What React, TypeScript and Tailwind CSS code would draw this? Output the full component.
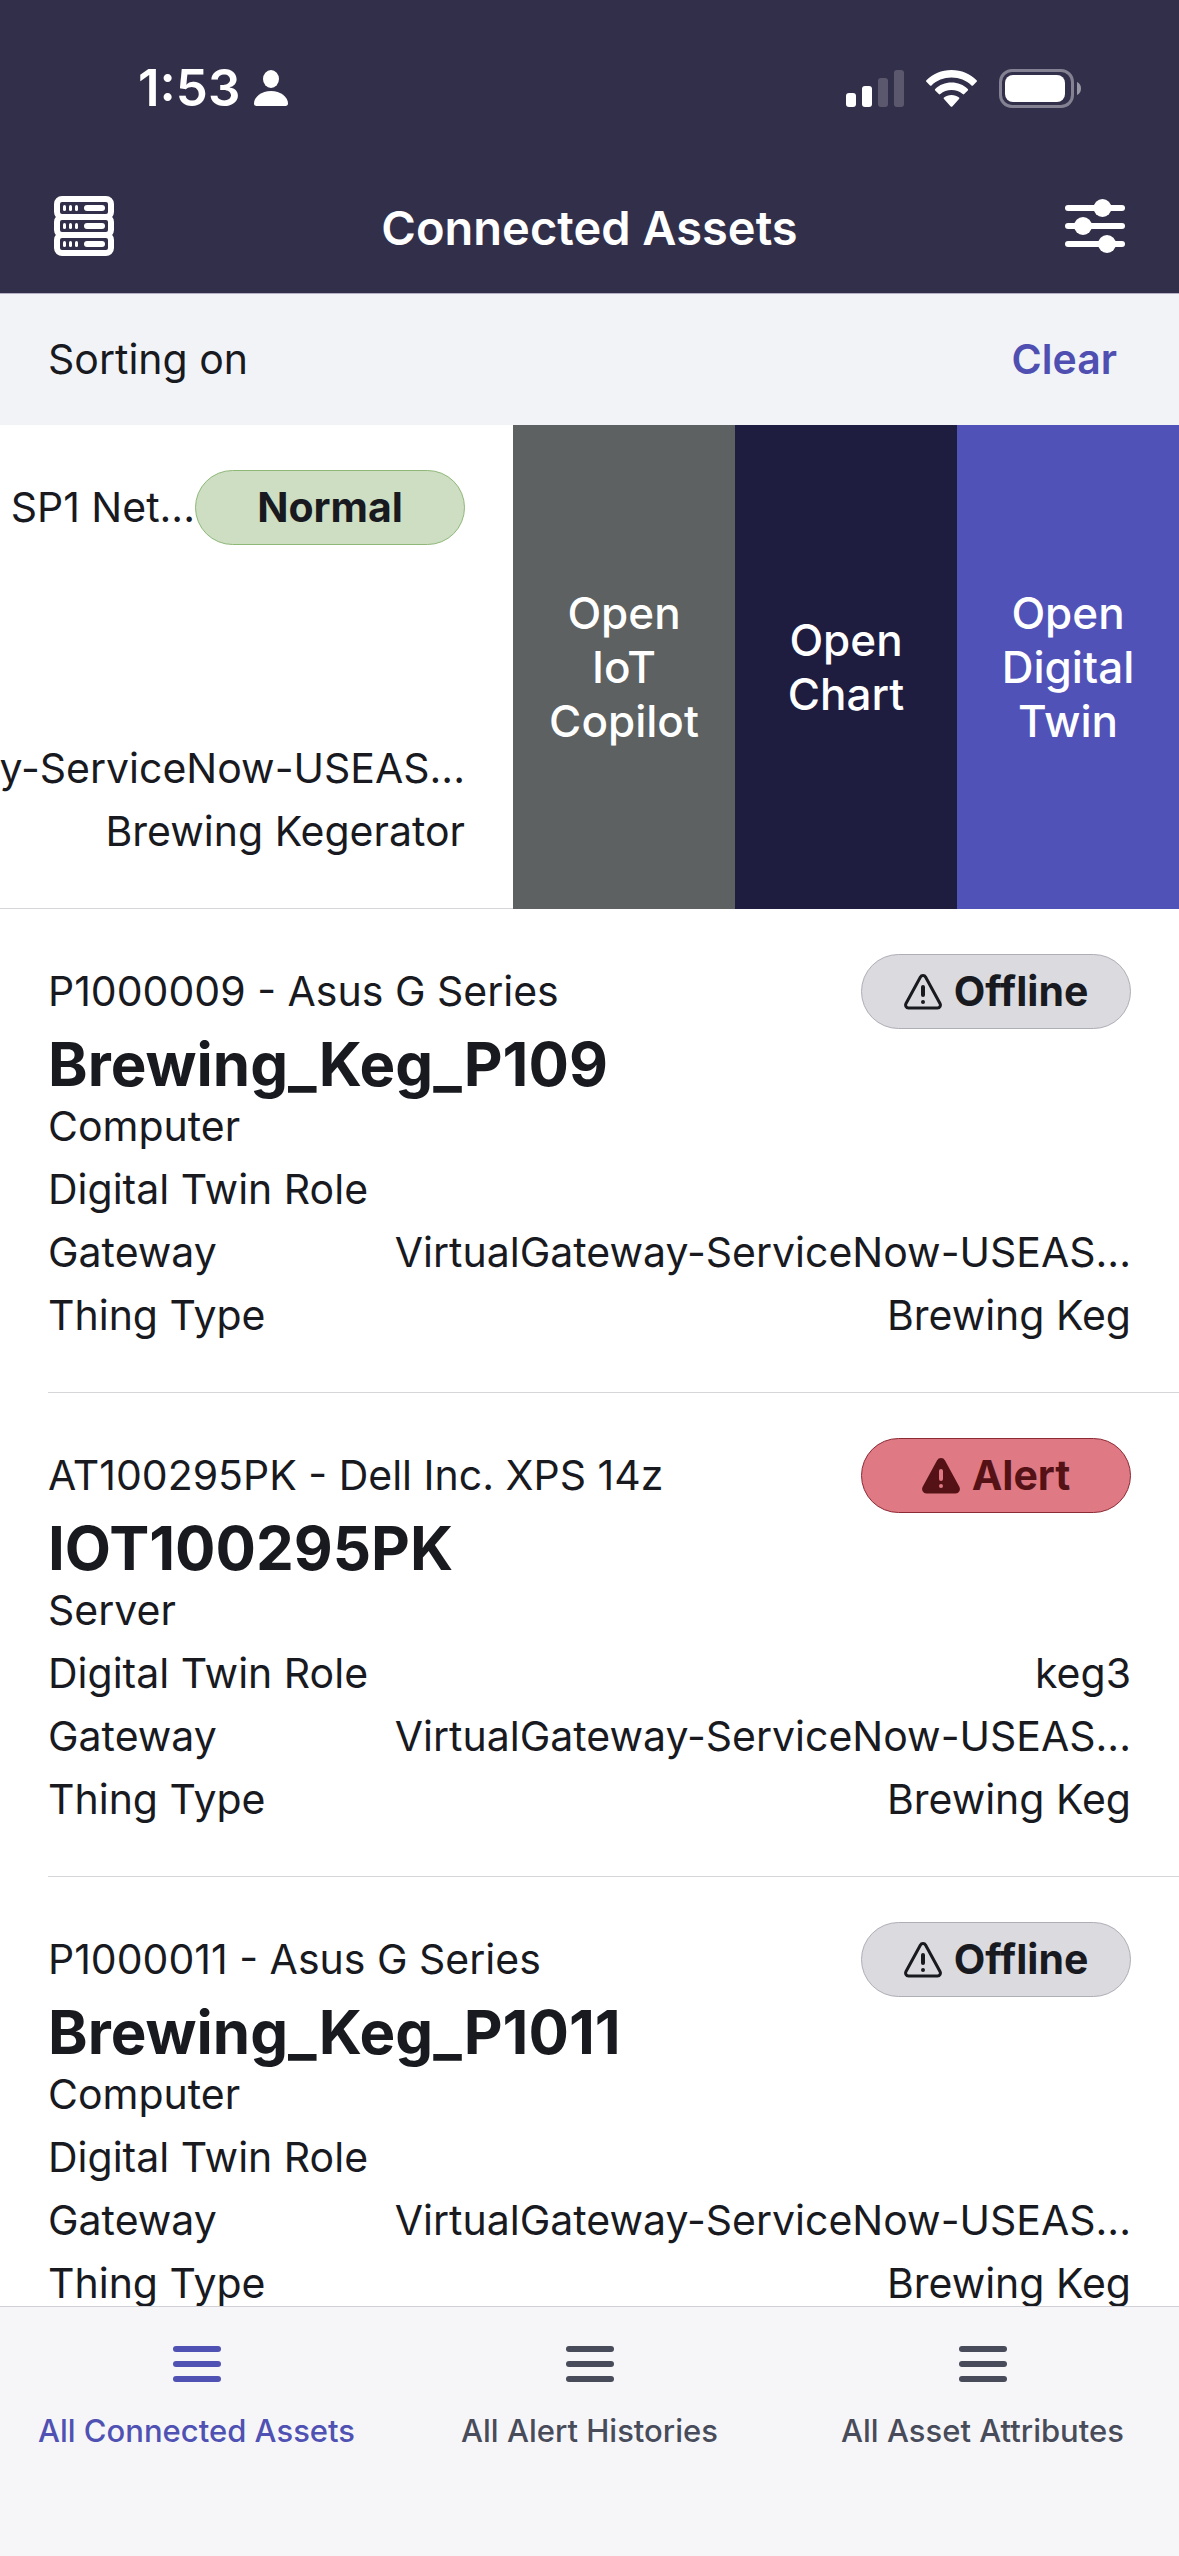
import clsx from 'clsx'

type Status = 'Normal' | 'Offline' | 'Alert'

type Asset = {
  summary: string
  name?: string
  category?: string
  role?: string
  gateway: string
  thingType: string
  status: Status
}

const GATEWAY = 'VirtualGateway-ServiceNow-USEAS...'

const swipedAsset: Asset = {
  summary: 'SP1 Net...',
  gateway: GATEWAY,
  thingType: 'Brewing Kegerator',
  status: 'Normal',
}

const assets: Asset[] = [
  {
    summary: 'P1000009 - Asus G Series',
    name: 'Brewing_Keg_P109',
    category: 'Computer',
    gateway: GATEWAY,
    thingType: 'Brewing Keg',
    status: 'Offline',
  },
  {
    summary: 'AT100295PK - Dell Inc. XPS 14z',
    name: 'IOT100295PK',
    category: 'Server',
    role: 'keg3',
    gateway: GATEWAY,
    thingType: 'Brewing Keg',
    status: 'Alert',
  },
  {
    summary: 'P1000011 - Asus G Series',
    name: 'Brewing_Keg_P1011',
    category: 'Computer',
    gateway: GATEWAY,
    thingType: 'Brewing Keg',
    status: 'Offline',
  },
]

const swipeActions = [
  { label: 'Open IoT Copilot', className: 'bg-[#5d6161]' },
  { label: 'Open Chart', className: 'bg-[#1e1d40]' },
  { label: 'Open Digital Twin', className: 'bg-[#5052b8]' },
]

const tabs = ['All Connected Assets', 'All Alert Histories', 'All Asset Attributes']

const pillStyles: Record<Status, string> = {
  Normal: 'border-[#8fb878] bg-[#cddec3] text-[#181a1f]',
  Offline: 'border-[#aeaeb6] bg-[#dadadf] text-[#181a1f]',
  Alert: 'border-[#8c2a35] bg-[#df7a84] text-[#551216]',
}

function StatusBar() {
  return (
    <div className="flex h-[176px] items-center justify-between pl-[138px] pr-[98px] text-white">
      <div className="flex items-center gap-[14px]">
        <span className="text-[51px] font-semibold leading-[60px]">1:53</span>
        <svg className="h-9 w-[34px]" viewBox="0 0 34 36" fill="currentColor" aria-hidden="true">
          <ellipse cx="17" cy="9" rx="8" ry="9" />
          <path d="M17 21c9.500 0 17 6 17 12.500 0 1.500-1 2.500-2.500 2.500h-29C1 36 0 35 0 33.500 0 27 7.500 21 17 21z" />
        </svg>
      </div>
      <div className="flex items-center gap-[22px]">
        <svg className="h-[37px] w-[58px]" viewBox="0 0 58 37" fill="currentColor" aria-hidden="true">
          <rect x="0" y="23" width="10" height="14" rx="3" />
          <rect x="16" y="16" width="10" height="21" rx="3" />
          <rect x="32" y="8" width="10" height="29" rx="3" opacity=".2" />
          <rect x="48" y="0" width="10" height="37" rx="3" opacity=".2" />
        </svg>
        <svg className="h-[37px] w-[51px]" viewBox="0 0 51 37" fill="currentColor" aria-hidden="true">
          <path d="M25.500 0C35.500 0 44.300 4 50.600 10.300c.5.5.5 1 0 1.500l-3.600 3.600c-.5.500-1 .5-1.500 0C40.300 10.500 33.300 7.600 25.500 7.600S10.700 10.500 5.500 15.400c-.5.500-1 .5-1.500 0L.4 11.800c-.5-.5-.5-1 0-1.500C6.700 4 15.500 0 25.500 0z" />
          <path d="M25.500 12.600c6.300 0 12 2.400 16.300 6.300.5.500.5 1 0 1.500l-3.600 3.700c-.5.500-1 .5-1.500 0-3-2.600-6.900-4.100-11.200-4.100s-8.200 1.500-11.200 4.100c-.5.500-1 .5-1.500 0l-3.600-3.700c-.5-.5-.5-1 0-1.500 4.300-3.900 10-6.300 16.300-6.300z" />
          <path d="M25.500 25c2.900 0 5.500 1 7.500 2.600.5.400.5 1 0 1.500l-6.700 7.300c-.5.500-1.100.5-1.600 0L18 29.100c-.5-.5-.5-1.100 0-1.500 2-1.600 4.600-2.600 7.500-2.600z" />
        </svg>
        <svg className="h-[39px] w-[82px]" viewBox="0 0 82 39" fill="currentColor" aria-hidden="true">
          <rect x="1.500" y="1.500" width="72" height="36" rx="11.500" fill="none" stroke="currentColor" strokeWidth="3" opacity=".4" />
          <rect x="6" y="6" width="60" height="27" rx="8" />
          <path d="M78 13c2.500 1 4 3.500 4 6.500S80.500 25 78 26z" opacity=".5" />
        </svg>
      </div>
    </div>
  )
}

function ServerIcon() {
  return (
    <svg className="h-[60px] w-[60px]" viewBox="0 0 60 60" fill="currentColor" aria-hidden="true">
      {[0, 18, 36].map((y) => (
        <g key={y} transform={`translate(0 ${y})`}>
          <rect x="3" y="3" width="54" height="18" rx="5" fill="none" stroke="currentColor" strokeWidth="6" />
          <rect x="9" y="9" width="3" height="6" rx="1.500" />
          <rect x="15" y="9" width="3" height="6" rx="1.500" />
          <rect x="21" y="9" width="3" height="6" rx="1.500" />
          <rect x="30" y="9" width="21" height="6" rx="3" />
        </g>
      ))}
    </svg>
  )
}

function SlidersIcon() {
  return (
    <svg className="h-[60px] w-[60px]" viewBox="0 0 60 60" fill="currentColor" aria-hidden="true">
      <rect x="0" y="9" width="60" height="6" rx="3" />
      <rect x="0" y="27" width="60" height="6" rx="3" />
      <rect x="0" y="45" width="60" height="6" rx="3" />
      <circle cx="37.500" cy="12" r="9" />
      <circle cx="18" cy="30" r="9" />
      <circle cx="42" cy="48" r="9" />
    </svg>
  )
}

function WarningIcon({ filled }: { filled: boolean }) {
  return (
    <svg className="h-9 w-[38px]" viewBox="0 0 38 36" fill="none" aria-hidden="true">
      <path
        d="M16.300 3.200 2 29.500C.9 31.600 2.200 34 4.500 34h29c2.300 0 3.600-2.400 2.500-4.500L21.700 3.200c-1.200-2.200-4.200-2.200-5.400 0z"
        fill={filled ? 'currentColor' : 'none'}
        stroke="currentColor"
        strokeWidth="3"
        strokeLinejoin="round"
      />
      <path
        d="M19 13v8M19 28v.100"
        stroke={filled ? '#df7a84' : 'currentColor'}
        strokeWidth="4"
        strokeLinecap="round"
      />
    </svg>
  )
}

function MenuIcon() {
  return (
    <svg className="h-9 w-12" viewBox="0 0 48 36" fill="currentColor" aria-hidden="true">
      <rect x="0" y="0" width="48" height="6" rx="3" />
      <rect x="0" y="15" width="48" height="6" rx="3" />
      <rect x="0" y="30" width="48" height="6" rx="3" />
    </svg>
  )
}

function StatusPill({ status }: { status: Status }) {
  return (
    <span
      className={clsx(
        'flex h-[75px] w-[270px] shrink-0 items-center justify-center gap-3 rounded-[38px] border font-bold',
        pillStyles[status],
      )}
    >
      {status !== 'Normal' && <WarningIcon filled={status === 'Alert'} />}
      {status}
    </span>
  )
}

function AssetField({ label, value }: { label: string; value?: string }) {
  return (
    <div className="flex justify-between">
      <dt>{label}</dt>
      <dd>{value}</dd>
    </div>
  )
}

function AssetCard({ asset, swiped = false }: { asset: Asset; swiped?: boolean }) {
  return (
    <article className="w-full shrink-0 pl-12">
      <div className="border-b border-[#d5d5da] py-[45px] pr-12">
        <div className={clsx('flex items-center', swiped ? 'justify-end' : 'justify-between')}>
          <p>{asset.summary}</p>
          <StatusPill status={asset.status} />
        </div>
        <h2 className="mt-1 h-[62px] text-[60px] font-bold leading-[62px]">{asset.name}</h2>
        <p className="h-[63px]">{asset.category}</p>
        <dl>
          <AssetField label="Digital Twin Role" value={asset.role} />
          <AssetField label="Gateway" value={asset.gateway} />
          <AssetField label="Thing Type" value={asset.thingType} />
        </dl>
      </div>
    </article>
  )
}

export default function App() {
  return (
    <div className="flex h-screen flex-col overflow-hidden bg-white font-['Inter',sans-serif] text-[41px] leading-[63px] text-[#181a1f]">
      <header className="border-b border-[#b5b0c4] bg-[#322f4a] text-white">
        <StatusBar />
        <div className="flex h-[117px] items-start justify-between px-[54px] pt-5">
          <button type="button" aria-label="Applications">
            <ServerIcon />
          </button>
          <h1 className="text-[47px] font-semibold leading-[64px]">Connected Assets</h1>
          <button type="button" aria-label="Filter and sort">
            <SlidersIcon />
          </button>
        </div>
      </header>

      <div className="flex h-[131px] shrink-0 items-center justify-between bg-[#f2f3f7] pl-12 pr-[62px]">
        <p>Sorting on</p>
        <button type="button" className="font-semibold text-[#4f4fb2]">
          Clear
        </button>
      </div>

      <main className="min-h-0 flex-1 overflow-hidden">
        {/* first row is swiped left to reveal its actions */}
        <div className="flex justify-end overflow-hidden">
          <AssetCard asset={swipedAsset} swiped />
          <div className="flex shrink-0">
            {swipeActions.map((action) => (
              <button
                key={action.label}
                type="button"
                className={clsx(
                  'w-[222px] px-8 text-center text-[44px] font-medium leading-[54px] text-white',
                  action.className,
                )}
              >
                {action.label}
              </button>
            ))}
          </div>
        </div>
        {assets.map((asset) => (
          <AssetCard key={asset.name} asset={asset} />
        ))}
      </main>

      <nav className="grid h-[250px] shrink-0 grid-cols-3 items-start border-t border-[#d0d0d8] bg-[#f6f6f9] pt-[39px]">
        {tabs.map((tab, index) => (
          <a
            key={tab}
            href="#"
            aria-current={index === 0 ? 'page' : undefined}
            className={clsx(
              'flex flex-col items-center gap-7 text-[31px] font-medium leading-[42px]',
              index === 0 ? 'text-[#4f52b2]' : 'text-[#484c5a]',
            )}
          >
            <MenuIcon />
            {tab}
          </a>
        ))}
      </nav>
    </div>
  )
}
